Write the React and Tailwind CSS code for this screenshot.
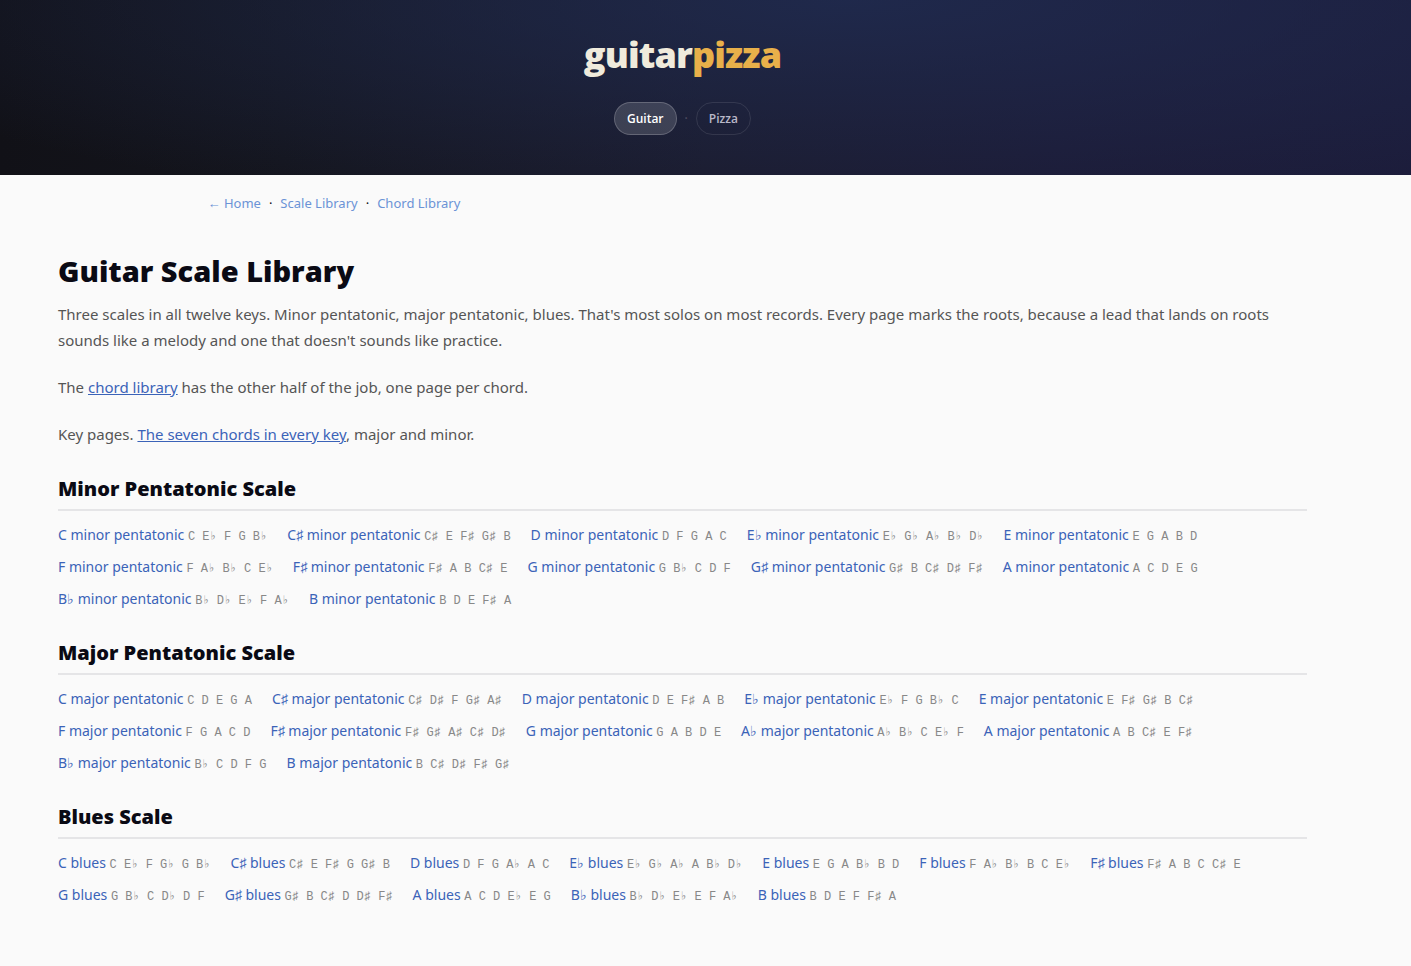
const minorScales = [
  { name: "C minor pentatonic", notes: "C E♭ F G B♭" },
  { name: "C♯ minor pentatonic", notes: "C♯ E F♯ G♯ B" },
  { name: "D minor pentatonic", notes: "D F G A C" },
  { name: "E♭ minor pentatonic", notes: "E♭ G♭ A♭ B♭ D♭" },
  { name: "E minor pentatonic", notes: "E G A B D" },
  { name: "F minor pentatonic", notes: "F A♭ B♭ C E♭" },
  { name: "F♯ minor pentatonic", notes: "F♯ A B C♯ E" },
  { name: "G minor pentatonic", notes: "G B♭ C D F" },
  { name: "G♯ minor pentatonic", notes: "G♯ B C♯ D♯ F♯" },
  { name: "A minor pentatonic", notes: "A C D E G" },
  { name: "B♭ minor pentatonic", notes: "B♭ D♭ E♭ F A♭" },
  { name: "B minor pentatonic", notes: "B D E F♯ A" },
];

const majorScales = [
  { name: "C major pentatonic", notes: "C D E G A" },
  { name: "C♯ major pentatonic", notes: "C♯ D♯ F G♯ A♯" },
  { name: "D major pentatonic", notes: "D E F♯ A B" },
  { name: "E♭ major pentatonic", notes: "E♭ F G B♭ C" },
  { name: "E major pentatonic", notes: "E F♯ G♯ B C♯" },
  { name: "F major pentatonic", notes: "F G A C D" },
  { name: "F♯ major pentatonic", notes: "F♯ G♯ A♯ C♯ D♯" },
  { name: "G major pentatonic", notes: "G A B D E" },
  { name: "A♭ major pentatonic", notes: "A♭ B♭ C E♭ F" },
  { name: "A major pentatonic", notes: "A B C♯ E F♯" },
  { name: "B♭ major pentatonic", notes: "B♭ C D F G" },
  { name: "B major pentatonic", notes: "B C♯ D♯ F♯ G♯" },
];

const bluesScales = [
  { name: "C blues", notes: "C E♭ F G♭ G B♭" },
  { name: "C♯ blues", notes: "C♯ E F♯ G G♯ B" },
  { name: "D blues", notes: "D F G A♭ A C" },
  { name: "E♭ blues", notes: "E♭ G♭ A♭ A B♭ D♭" },
  { name: "E blues", notes: "E G A B♭ B D" },
  { name: "F blues", notes: "F A♭ B♭ B C E♭" },
  { name: "F♯ blues", notes: "F♯ A B C C♯ E" },
  { name: "G blues", notes: "G B♭ C D♭ D F" },
  { name: "G♯ blues", notes: "G♯ B C♯ D D♯ F♯" },
  { name: "A blues", notes: "A C D E♭ E G" },
  { name: "B♭ blues", notes: "B♭ D♭ E♭ E F A♭" },
  { name: "B blues", notes: "B D E F F♯ A" },
];

function ScaleSection({ title, scales }) {
  return (
    <section className="mt-6">
      <h2 className="border-b-2 border-[#e5e5e7] pb-1.5 font-['Open_Sans',sans-serif] text-[20px] leading-7 font-extrabold text-[#0a0a14]">
        {title}
      </h2>
      <ul className="mt-2 flex flex-wrap gap-x-5">
        {scales.map((s) => (
          <li key={s.name} className="h-8 text-[14px] leading-8 whitespace-nowrap">
            <a href="#" className="text-[#3b63b8]">
              {s.name}
            </a>{" "}
            <span className="font-['Liberation_Mono',monospace] text-[12px] text-[#888]">
              {s.notes}
            </span>
          </li>
        ))}
      </ul>
    </section>
  );
}

export default function App() {
  return (
    <div className="min-h-screen bg-[#fafafa] font-['Noto_Sans',sans-serif] text-[#0a0a14]">
      {/* Header */}
      <header className="bg-[radial-gradient(ellipse_at_60%_0%,rgba(32,44,82,0.8),transparent_90%),linear-gradient(90deg,#111117_0%,#14151d_20%,#1b1b2c_50%,#1c1b36_75%,#1c1c3a_100%)] pt-8 pr-[46px] pb-10">
        <div className="flex flex-col items-center">
          <a
            href="#"
            className="font-['Open_Sans',sans-serif] text-[36px] leading-[46px] font-extrabold tracking-tight text-[#f0ebdc]"
          >
            guitar<span className="text-[#e8b04a]">pizza</span>
          </a>
          <nav className="mt-6 flex items-center gap-2 font-['Open_Sans',sans-serif] text-[12px] font-semibold">
            <a href="#" className="rounded-full border border-white/20 bg-white/15 px-3 py-2 leading-[15px] text-white">
              Guitar
            </a>
            <span className="text-white/20">·</span>
            <a href="#" className="rounded-full border border-white/10 px-3 py-2 leading-[15px] text-[#b9b8c8]">
              Pizza
            </a>
          </nav>
        </div>
      </header>

      {/* Breadcrumbs */}
      <div className="pr-[46px]">
        <nav className="mx-auto max-w-[950px] pt-4 text-[13px] leading-6">
          <a href="#" className="text-[#6b93d6]">← Home</a>
          <span className="mx-2">·</span>
          <a href="#" className="text-[#6b93d6]">Scale Library</a>
          <span className="mx-2">·</span>
          <a href="#" className="text-[#6b93d6]">Chord Library</a>
        </nav>
      </div>

      <main className="pt-9 pr-[104px] pb-12 pl-[58px]">
        <h1 className="font-['Open_Sans',sans-serif] text-[29px] leading-10 font-extrabold">Guitar Scale Library</h1>
        <div className="mt-2.5 mb-7 space-y-[21px] text-[15px] leading-[26px] text-[#555]">
          <p>
            Three scales in all twelve keys. Minor pentatonic, major pentatonic, blues. That's most solos on most
            records. Every page marks the roots, because a lead that lands on roots sounds like a melody and one that
            doesn't sounds like practice.
          </p>
          <p>
            The <a href="#" className="text-[#3b63b8] underline">chord library</a> has the other half of the job, one
            page per chord.
          </p>
          <p>
            Key pages. <a href="#" className="text-[#3b63b8] underline">The seven chords in every key</a>, major and
            minor.
          </p>
        </div>

        <ScaleSection title="Minor Pentatonic Scale" scales={minorScales} />
        <ScaleSection title="Major Pentatonic Scale" scales={majorScales} />
        <ScaleSection title="Blues Scale" scales={bluesScales} />
      </main>
    </div>
  );
}
